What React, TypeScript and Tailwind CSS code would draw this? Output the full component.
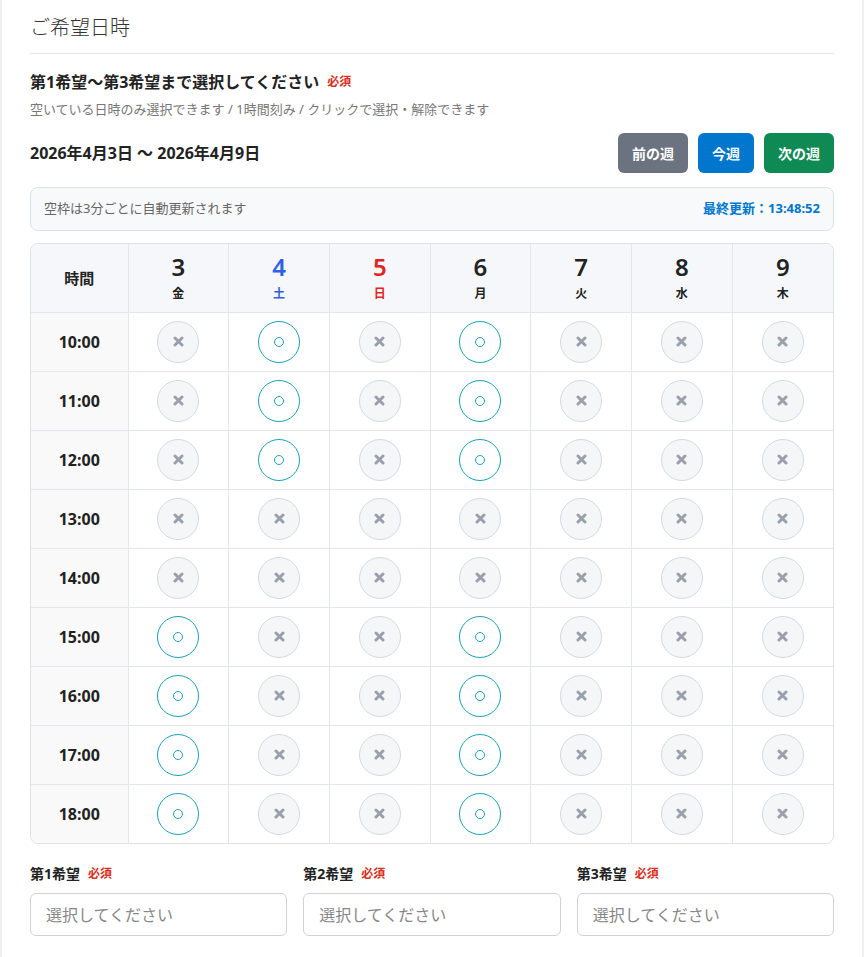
import React from 'react'

type Day = { date: number; label: string; tone: 'plain' | 'sat' | 'sun' }

const days: Day[] = [
  { date: 3, label: '金', tone: 'plain' },
  { date: 4, label: '土', tone: 'sat' },
  { date: 5, label: '日', tone: 'sun' },
  { date: 6, label: '月', tone: 'plain' },
  { date: 7, label: '火', tone: 'plain' },
  { date: 8, label: '水', tone: 'plain' },
  { date: 9, label: '木', tone: 'plain' },
]

// open slots per hour, as day-of-month
const openSlots: Record<string, number[]> = {
  '10:00': [4, 6],
  '11:00': [4, 6],
  '12:00': [4, 6],
  '13:00': [],
  '14:00': [],
  '15:00': [3, 6],
  '16:00': [3, 6],
  '17:00': [3, 6],
  '18:00': [3, 6],
}

const toneClass = {
  plain: 'text-[#222]',
  sat: 'text-[#2f5fe3]',
  sun: 'text-[#e02424]',
}

function Required() {
  return <span className="ml-2 text-[12px] font-bold text-[#d92d20]">必須</span>
}

function Slot({ open }: { open: boolean }) {
  if (open) {
    return (
      <button className="flex h-[42px] w-[42px] items-center justify-center rounded-full border border-[#1aa3b5] bg-white">
        <span className="h-[10px] w-[10px] rounded-full border border-[#1aa3b5]" />
      </button>
    )
  }
  return (
    <div className="flex h-[42px] w-[42px] items-center justify-center rounded-full border border-[#d6d9de] bg-[#f5f6f8]">
      <svg width="11" height="11" viewBox="0 0 11 11">
        <path d="M2 2 9 9M9 2 2 9" stroke="#9aa0ab" strokeWidth="3" strokeLinecap="round" />
      </svg>
    </div>
  )
}

export default function App() {
  const hours = Object.keys(openSlots)

  return (
    <div
      className="min-h-screen bg-[#eef0f4] px-[2px]"
      style={{ fontFamily: '"Noto Sans", "Noto Sans CJK JP", sans-serif' }}
    >
      <div className="min-h-[957px] bg-white px-[28px] pt-[13px] pb-6 text-[#222]">
        <h2 className="border-b border-[#e5e7eb] pb-[10px] text-[20px] font-light leading-[30px] text-[#333]">
          ご希望日時
        </h2>

        <div className="mt-[16px] flex items-center">
          <p className="text-[16px] font-bold leading-[24px]">第1希望〜第3希望まで選択してください</p>
          <Required />
        </div>
        <p className="mt-[5px] text-[13px] leading-[20px] text-[#777]">
          空いている日時のみ選択できます / 1時間刻み / クリックで選択・解除できます
        </p>

        <div className="mt-[14px] flex items-center justify-between">
          <p className="text-[16px] font-bold">2026年4月3日 〜 2026年4月9日</p>
          <div className="flex gap-[10px]">
            <button className="h-[40px] rounded-[6px] bg-[#6b7280] px-[14px] text-[14px] font-bold text-white">
              前の週
            </button>
            <button className="h-[40px] rounded-[6px] bg-[#0077cc] px-[14px] text-[14px] font-bold text-white">
              今週
            </button>
            <button className="h-[40px] rounded-[6px] bg-[#0f8a55] px-[14px] text-[14px] font-bold text-white">
              次の週
            </button>
          </div>
        </div>

        <div className="mt-[14px] flex h-[44px] items-center justify-between rounded-[8px] border border-[#dde1e8] bg-[#f8f9fb] px-[13px] text-[13px]">
          <span className="text-[#666]">空枠は3分ごとに自動更新されます</span>
          <span className="font-bold text-[#0077cc]">最終更新：13:48:52</span>
        </div>

        <div className="mt-[12px] overflow-hidden rounded-[8px] border border-[#dfe2e8]">
          <table className="w-full table-fixed border-collapse">
            <colgroup>
              <col className="w-[97px]" />
            </colgroup>
            <thead>
              <tr className="h-[68px] bg-[#f6f7fa]">
                <th className="border-r border-b border-[#e3e6ec] text-[15px] font-bold">時間</th>
                {days.map((d) => (
                  <th
                    key={d.date}
                    className={`border-b border-[#e3e6ec] [&:not(:last-child)]:border-r ${toneClass[d.tone]}`}
                  >
                    <div className="text-[24px] leading-[28px] font-semibold">{d.date}</div>
                    <div className="mt-[5px] text-[12px] font-semibold leading-[16px]">{d.label}</div>
                  </th>
                ))}
              </tr>
            </thead>
            <tbody>
              {hours.map((h, i) => (
                <tr key={h} className="h-[59px]">
                  <td
                    className={`border-r border-[#e3e6ec] bg-[#f9f9fa] text-center text-[16px] font-bold ${
                      i < hours.length - 1 ? 'border-b' : ''
                    }`}
                  >
                    {h}
                  </td>
                  {days.map((d) => (
                    <td
                      key={d.date}
                      className={`border-[#e3e6ec] [&:not(:last-child)]:border-r ${
                        i < hours.length - 1 ? 'border-b' : ''
                      }`}
                    >
                      <div className="flex justify-center">
                        <Slot open={openSlots[h].includes(d.date)} />
                      </div>
                    </td>
                  ))}
                </tr>
              ))}
            </tbody>
          </table>
        </div>

        <div className="mt-[20px] grid grid-cols-3 gap-[16px]">
          {['第1希望', '第2希望', '第3希望'].map((label) => (
            <div key={label}>
              <div className="flex items-center text-[14px] font-bold leading-[20px]">
                {label}
                <Required />
              </div>
              <input
                readOnly
                placeholder="選択してください"
                className="mt-[9px] h-[43px] w-full rounded-[6px] border border-[#cfd2da] px-[15px] text-[16px] placeholder:text-[#888]"
              />
            </div>
          ))}
        </div>
      </div>
    </div>
  )
}
